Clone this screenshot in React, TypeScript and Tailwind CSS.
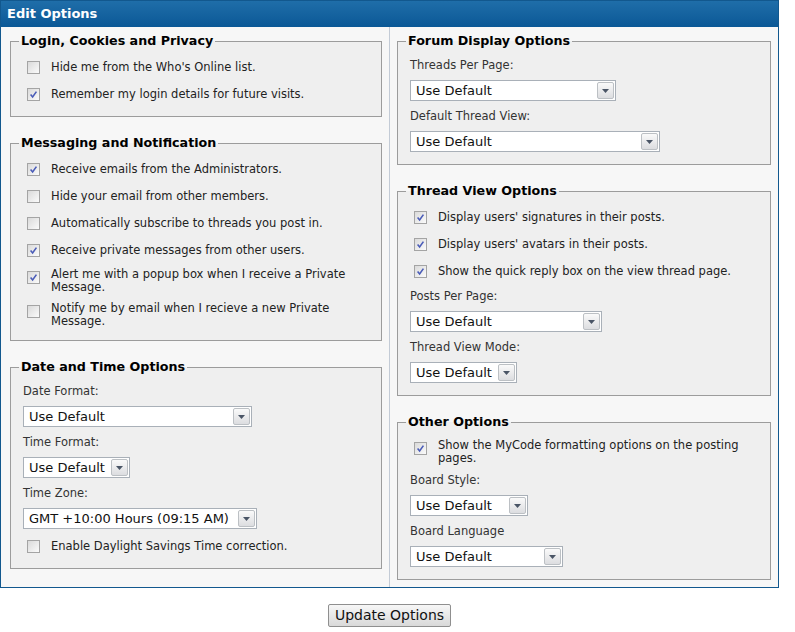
import React from "react";

type Row =
  | { kind: "check"; text: string; checked: boolean }
  | { kind: "select"; label: string; value: string; width: string };

const Checkbox: React.FC<{ checked: boolean }> = ({ checked }) => (
  <span className="flex h-[13px] w-[13px] shrink-0 items-center justify-center border border-[#a4a4a4] bg-gradient-to-br from-[#dadada] to-[#fbfbfb]">
    {checked && (
      <svg width="9" height="9" viewBox="0 0 9 9">
        <path d="M1.6 4.6 L3.6 6.9 L7.4 1.6" fill="none" stroke="#4a5cb8" strokeWidth="1.6" />
      </svg>
    )}
  </span>
);

const Select: React.FC<{ value: string; width: string }> = ({ value, width }) => (
  <div className={`flex h-[21px] items-center border border-[#a9b0b8] bg-white pl-[5px] text-[13px] text-[#111] ${width}`}>
    <span className="flex-1 whitespace-nowrap">{value}</span>
    <span className="mr-[1px] flex h-[17px] w-[17px] items-center justify-center rounded-[2px] border border-[#bcc0c4] bg-gradient-to-b from-[#fafafa] to-[#dcdde0]">
      <svg width="7" height="4" viewBox="0 0 7 4">
        <path d="M0 0 H7 L3.5 4 Z" fill="#4a5566" />
      </svg>
    </span>
  </div>
);

const Fieldset: React.FC<{ title: string; rows: Row[]; first?: boolean }> = ({ title, rows, first }) => (
  <fieldset className={`border border-[#9c9c9c] bg-[#efefef] px-[8px] pt-[4px] pb-[8px] ${first ? "" : "mt-[17px]"}`}>
    <legend className="px-[2px] text-[12.7px] leading-[18px] font-bold text-black">{title}</legend>
    {rows.map((r, i) =>
      r.kind === "check" ? (
        <div key={i} className="flex items-center py-[4px]">
          <div className="self-start py-[3px] pr-[7px] pl-[8px]">
            <Checkbox checked={r.checked} />
          </div>
          <div className="px-[4px] text-[11.5px] leading-[13px] text-[#222]">{r.text}</div>
        </div>
      ) : (
        <div key={i} className="px-[4px]">
          <div className="py-[4px] text-[11.5px] leading-[14px] text-[#333]">{r.label}</div>
          <div className="py-[4px]">
            <Select value={r.value} width={r.width} />
          </div>
        </div>
      )
    )}
  </fieldset>
);

export default function App() {
  return (
    <div className="min-h-screen bg-white font-['DejaVu_Sans',Verdana,sans-serif]">
      <div className="w-[779px] border border-[#12588e]">
        <div className="flex h-[26px] items-center bg-gradient-to-b from-[#1f6ea9] to-[#0a5896] pl-[6px] text-[13px] font-bold text-white">
          Edit Options
        </div>
        <div className="flex bg-[#f7f7f7]">
          <div className="w-[389px] border-r border-[#c3cbd6] pt-[5px] pr-[7px] pb-[17px] pl-[9px]">
            <Fieldset
              first
              title="Login, Cookies and Privacy"
              rows={[
                { kind: "check", text: "Hide me from the Who's Online list.", checked: false },
                { kind: "check", text: "Remember my login details for future visits.", checked: true },
              ]}
            />
            <Fieldset
              title="Messaging and Notification"
              rows={[
                { kind: "check", text: "Receive emails from the Administrators.", checked: true },
                { kind: "check", text: "Hide your email from other members.", checked: false },
                { kind: "check", text: "Automatically subscribe to threads you post in.", checked: false },
                { kind: "check", text: "Receive private messages from other users.", checked: true },
                { kind: "check", text: "Alert me with a popup box when I receive a Private Message.", checked: true },
                { kind: "check", text: "Notify me by email when I recieve a new Private Message.", checked: false },
              ]}
            />
            <Fieldset
              title="Date and Time Options"
              rows={[
                { kind: "select", label: "Date Format:", value: "Use Default", width: "w-[229px]" },
                { kind: "select", label: "Time Format:", value: "Use Default", width: "w-[107px]" },
                { kind: "select", label: "Time Zone:", value: "GMT +10:00 Hours (09:15 AM)", width: "w-[234px]" },
                { kind: "check", text: "Enable Daylight Savings Time correction.", checked: false },
              ]}
            />
          </div>
          <div className="flex-1 pt-[5px] pr-[7px] pb-[7px] pl-[7px]">
            <Fieldset
              first
              title="Forum Display Options"
              rows={[
                { kind: "select", label: "Threads Per Page:", value: "Use Default", width: "w-[206px]" },
                { kind: "select", label: "Default Thread View:", value: "Use Default", width: "w-[250px]" },
              ]}
            />
            <Fieldset
              title="Thread View Options"
              rows={[
                { kind: "check", text: "Display users' signatures in their posts.", checked: true },
                { kind: "check", text: "Display users' avatars in their posts.", checked: true },
                { kind: "check", text: "Show the quick reply box on the view thread page.", checked: true },
                { kind: "select", label: "Posts Per Page:", value: "Use Default", width: "w-[192px]" },
                { kind: "select", label: "Thread View Mode:", value: "Use Default", width: "w-[107px]" },
              ]}
            />
            <Fieldset
              title="Other Options"
              rows={[
                { kind: "check", text: "Show the MyCode formatting options on the posting pages.", checked: true },
                { kind: "select", label: "Board Style:", value: "Use Default", width: "w-[118px]" },
                { kind: "select", label: "Board Language", value: "Use Default", width: "w-[153px]" },
              ]}
            />
          </div>
        </div>
      </div>
      <div className="flex w-[779px] justify-center pt-[16px]">
        <button className="h-[23px] w-[123px] rounded-[2px] border border-[#8f8f8f] bg-gradient-to-b from-[#f7f7f7] to-[#d9d9d9] text-[14px] text-[#111]">
          Update Options
        </button>
      </div>
    </div>
  );
}
